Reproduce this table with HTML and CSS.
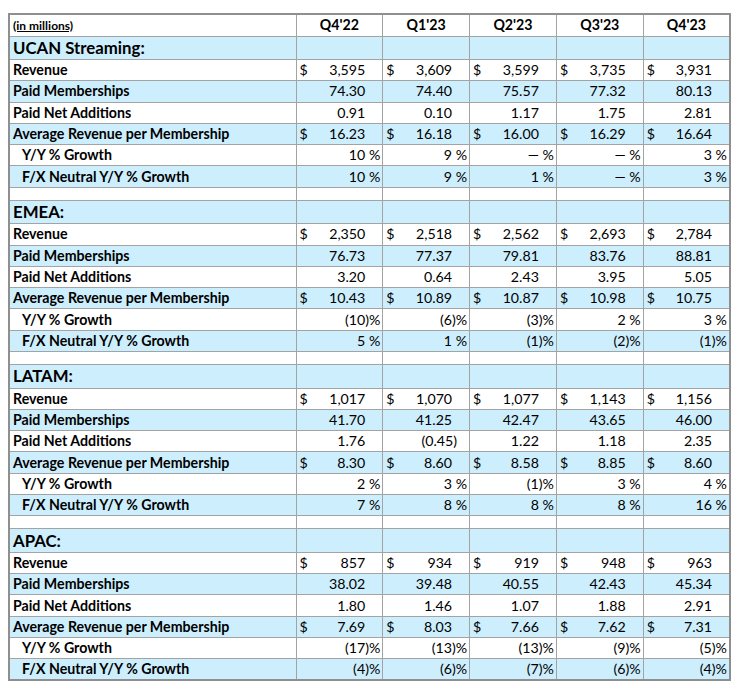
FILE: index.html
```html
<!DOCTYPE html>
<html>
<head>
<meta charset="utf-8">
<link rel="stylesheet" href="styles.css">
</head>
<body>
<table class="fin">
<colgroup><col class="c-label"><col class="c-q"><col class="c-q"><col class="c-q"><col class="c-q"><col class="c-q"></colgroup>
<tr class="head">
<td class="label"><span class="units">(in millions)</span></td>
<td class="q">Q4'22</td><td class="q">Q1'23</td><td class="q">Q2'23</td><td class="q">Q3'23</td><td class="q">Q4'23</td>
</tr>

<tr class="sect blue"><td class="label">UCAN Streaming:</td><td></td><td></td><td></td><td></td><td></td></tr>
<tr class="row"><td class="label">Revenue</td><td class="num"><div class="money"><span>$</span><span>3,595</span></div></td><td class="num"><div class="money"><span>$</span><span>3,609</span></div></td><td class="num"><div class="money"><span>$</span><span>3,599</span></div></td><td class="num"><div class="money"><span>$</span><span>3,735</span></div></td><td class="num"><div class="money"><span>$</span><span>3,931</span></div></td></tr>
<tr class="row blue"><td class="label">Paid Memberships</td><td class="num">74.30</td><td class="num">74.40</td><td class="num">75.57</td><td class="num">77.32</td><td class="num">80.13</td></tr>
<tr class="row"><td class="label">Paid Net Additions</td><td class="num">0.91</td><td class="num">0.10</td><td class="num">1.17</td><td class="num">1.75</td><td class="num">2.81</td></tr>
<tr class="row blue"><td class="label">Average Revenue per Membership</td><td class="num"><div class="money"><span>$</span><span>16.23</span></div></td><td class="num"><div class="money"><span>$</span><span>16.18</span></div></td><td class="num"><div class="money"><span>$</span><span>16.00</span></div></td><td class="num"><div class="money"><span>$</span><span>16.29</span></div></td><td class="num"><div class="money"><span>$</span><span>16.64</span></div></td></tr>
<tr class="row"><td class="label sub">Y/Y % Growth</td><td class="pct">10 %</td><td class="pct">9 %</td><td class="pct">— %</td><td class="pct">— %</td><td class="pct">3 %</td></tr>
<tr class="row blue"><td class="label sub">F/X Neutral Y/Y % Growth</td><td class="pct">10 %</td><td class="pct">9 %</td><td class="pct">1 %</td><td class="pct">— %</td><td class="pct">3 %</td></tr>
<tr class="gap"><td></td><td></td><td></td><td></td><td></td><td></td></tr>

<tr class="sect blue"><td class="label">EMEA:</td><td></td><td></td><td></td><td></td><td></td></tr>
<tr class="row"><td class="label">Revenue</td><td class="num"><div class="money"><span>$</span><span>2,350</span></div></td><td class="num"><div class="money"><span>$</span><span>2,518</span></div></td><td class="num"><div class="money"><span>$</span><span>2,562</span></div></td><td class="num"><div class="money"><span>$</span><span>2,693</span></div></td><td class="num"><div class="money"><span>$</span><span>2,784</span></div></td></tr>
<tr class="row blue"><td class="label">Paid Memberships</td><td class="num">76.73</td><td class="num">77.37</td><td class="num">79.81</td><td class="num">83.76</td><td class="num">88.81</td></tr>
<tr class="row"><td class="label">Paid Net Additions</td><td class="num">3.20</td><td class="num">0.64</td><td class="num">2.43</td><td class="num">3.95</td><td class="num">5.05</td></tr>
<tr class="row blue"><td class="label">Average Revenue per Membership</td><td class="num"><div class="money"><span>$</span><span>10.43</span></div></td><td class="num"><div class="money"><span>$</span><span>10.89</span></div></td><td class="num"><div class="money"><span>$</span><span>10.87</span></div></td><td class="num"><div class="money"><span>$</span><span>10.98</span></div></td><td class="num"><div class="money"><span>$</span><span>10.75</span></div></td></tr>
<tr class="row"><td class="label sub">Y/Y % Growth</td><td class="pct">(10)%</td><td class="pct">(6)%</td><td class="pct">(3)%</td><td class="pct">2 %</td><td class="pct">3 %</td></tr>
<tr class="row blue"><td class="label sub">F/X Neutral Y/Y % Growth</td><td class="pct">5 %</td><td class="pct">1 %</td><td class="pct">(1)%</td><td class="pct">(2)%</td><td class="pct">(1)%</td></tr>
<tr class="gap"><td></td><td></td><td></td><td></td><td></td><td></td></tr>

<tr class="sect blue"><td class="label">LATAM:</td><td></td><td></td><td></td><td></td><td></td></tr>
<tr class="row"><td class="label">Revenue</td><td class="num"><div class="money"><span>$</span><span>1,017</span></div></td><td class="num"><div class="money"><span>$</span><span>1,070</span></div></td><td class="num"><div class="money"><span>$</span><span>1,077</span></div></td><td class="num"><div class="money"><span>$</span><span>1,143</span></div></td><td class="num"><div class="money"><span>$</span><span>1,156</span></div></td></tr>
<tr class="row blue"><td class="label">Paid Memberships</td><td class="num">41.70</td><td class="num">41.25</td><td class="num">42.47</td><td class="num">43.65</td><td class="num">46.00</td></tr>
<tr class="row"><td class="label">Paid Net Additions</td><td class="num">1.76</td><td class="num neg">(0.45)</td><td class="num">1.22</td><td class="num">1.18</td><td class="num">2.35</td></tr>
<tr class="row blue"><td class="label">Average Revenue per Membership</td><td class="num"><div class="money"><span>$</span><span>8.30</span></div></td><td class="num"><div class="money"><span>$</span><span>8.60</span></div></td><td class="num"><div class="money"><span>$</span><span>8.58</span></div></td><td class="num"><div class="money"><span>$</span><span>8.85</span></div></td><td class="num"><div class="money"><span>$</span><span>8.60</span></div></td></tr>
<tr class="row"><td class="label sub">Y/Y % Growth</td><td class="pct">2 %</td><td class="pct">3 %</td><td class="pct">(1)%</td><td class="pct">3 %</td><td class="pct">4 %</td></tr>
<tr class="row blue"><td class="label sub">F/X Neutral Y/Y % Growth</td><td class="pct">7 %</td><td class="pct">8 %</td><td class="pct">8 %</td><td class="pct">8 %</td><td class="pct">16 %</td></tr>
<tr class="gap"><td></td><td></td><td></td><td></td><td></td><td></td></tr>

<tr class="sect blue"><td class="label">APAC:</td><td></td><td></td><td></td><td></td><td></td></tr>
<tr class="row"><td class="label">Revenue</td><td class="num"><div class="money"><span>$</span><span>857</span></div></td><td class="num"><div class="money"><span>$</span><span>934</span></div></td><td class="num"><div class="money"><span>$</span><span>919</span></div></td><td class="num"><div class="money"><span>$</span><span>948</span></div></td><td class="num"><div class="money"><span>$</span><span>963</span></div></td></tr>
<tr class="row blue"><td class="label">Paid Memberships</td><td class="num">38.02</td><td class="num">39.48</td><td class="num">40.55</td><td class="num">42.43</td><td class="num">45.34</td></tr>
<tr class="row"><td class="label">Paid Net Additions</td><td class="num">1.80</td><td class="num">1.46</td><td class="num">1.07</td><td class="num">1.88</td><td class="num">2.91</td></tr>
<tr class="row blue"><td class="label">Average Revenue per Membership</td><td class="num"><div class="money"><span>$</span><span>7.69</span></div></td><td class="num"><div class="money"><span>$</span><span>8.03</span></div></td><td class="num"><div class="money"><span>$</span><span>7.66</span></div></td><td class="num"><div class="money"><span>$</span><span>7.62</span></div></td><td class="num"><div class="money"><span>$</span><span>7.31</span></div></td></tr>
<tr class="row"><td class="label sub">Y/Y % Growth</td><td class="pct">(17)%</td><td class="pct">(13)%</td><td class="pct">(13)%</td><td class="pct">(9)%</td><td class="pct">(5)%</td></tr>
<tr class="row blue"><td class="label sub">F/X Neutral Y/Y % Growth</td><td class="pct">(4)%</td><td class="pct">(6)%</td><td class="pct">(7)%</td><td class="pct">(6)%</td><td class="pct">(4)%</td></tr>
</table>
</body>
</html>
```

FILE: styles.css
```css
html, body {
  background: #ffffff;
}
body {
  margin: 0;
  padding: 13px 8px 0 8px;
  font-family: Lato, "Open Sans", sans-serif;
  color: #000000;
}
.fin {
  border-collapse: collapse;
  table-layout: fixed;
  width: 721px;
  border: 2px solid #8f8f8f;
}
.c-label { width: 287px; }
.c-q { width: 86.8px; }
.fin td {
  border: 1px solid #a3a3a3;
  padding: 0 3px;
  font-size: 14.2px;
  line-height: 16px;
  white-space: nowrap;
  overflow: hidden;
}
.blue td { background: #cdeefd; }
.head { height: 22px; }
.sect { height: 23.5px; }
.row { height: 21.3px; }
.gap { height: 13px; }
.label {
  font-weight: 700;
  text-align: left;
}
.sub { padding-left: 12px !important; }
.sect .label {
  font-size: 16.8px;
  line-height: 20px;
}
.units {
  font-size: 12px;
  font-weight: 700;
  text-decoration: underline;
}
.q {
  text-align: center;
  font-weight: 700;
}
.num {
  text-align: right;
  padding-right: 17px !important;
}
.num.neg { padding-right: 12px !important; }
.money {
  display: flex;
  justify-content: space-between;
}
.pct {
  text-align: right;
  padding-right: 2px !important;
}
```
